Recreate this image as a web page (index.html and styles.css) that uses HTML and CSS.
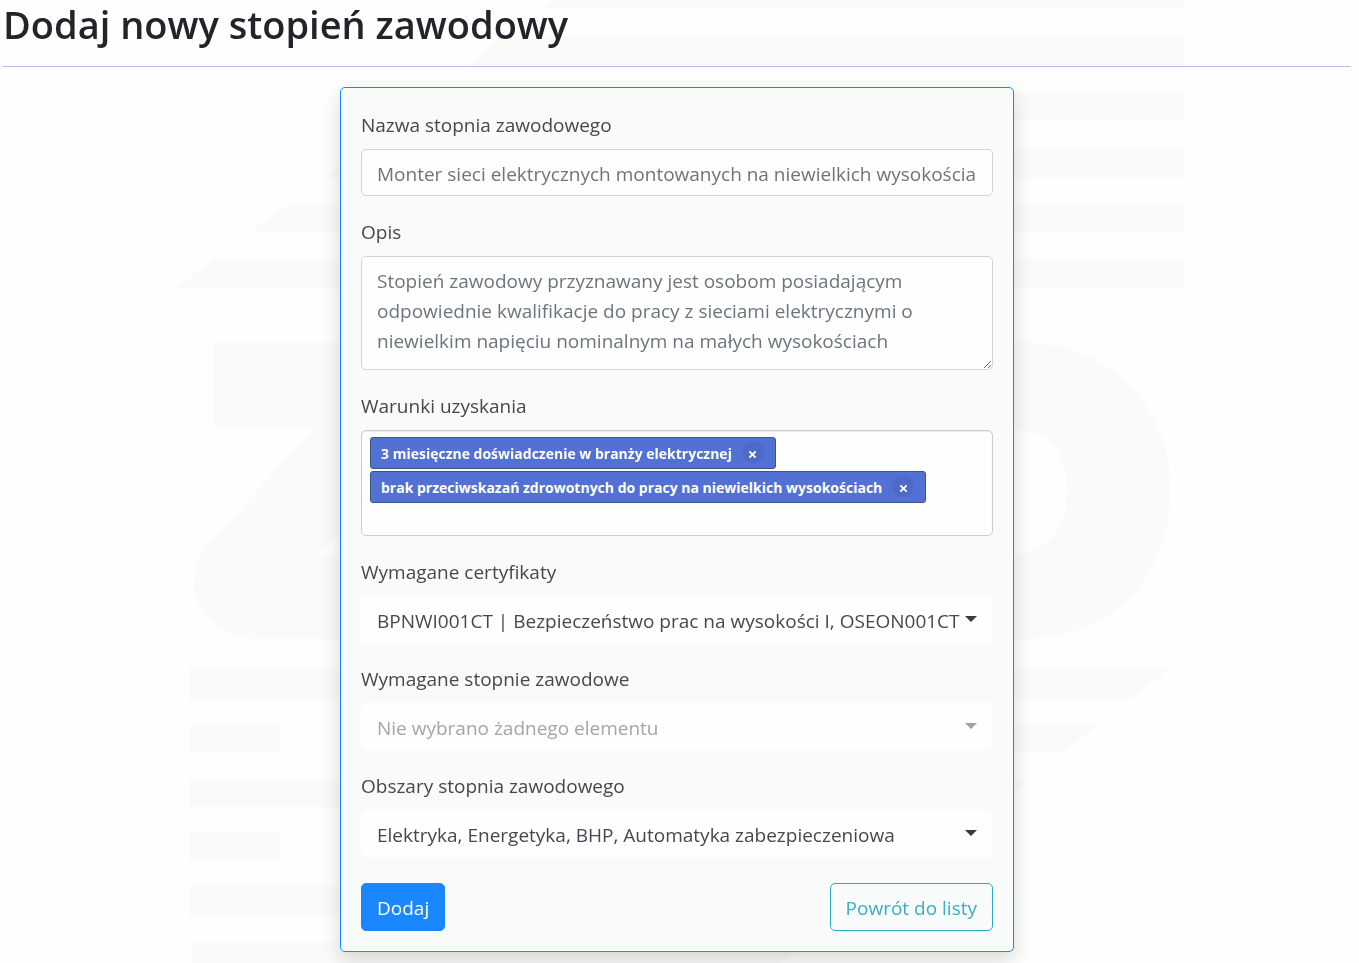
FILE: index.html
```html
<!DOCTYPE html>
<html lang="pl">
<head>
<meta charset="utf-8">
<meta name="viewport" content="width=device-width, initial-scale=1">
<title>Dodaj nowy stopień zawodowy</title>
<link rel="stylesheet" href="styles.css">
</head>
<body>
<svg class="backdrop" viewBox="0 0 1359 963" preserveAspectRatio="xMidYMid slice" aria-hidden="true">
  <g class="backdrop-stripes">
    <path d="M550 0H1183V9H541Z"/>
    <path d="M499 37H1183V66H468Z"/>
    <path d="M430 92H1183V121H391Z"/>
    <path d="M358 149H1183V178H322Z"/>
    <path d="M288 204H1183V233H249Z"/>
    <path d="M217 258H1183V289H175Z"/>
    <path d="M189 668H1171L1130 700H189Z"/>
    <path d="M189 725H280V752H189Z"/>
    <path d="M420 725H1099L1063 752H420Z"/>
    <path d="M189 779H1029L992 807H189Z"/>
    <path d="M189 832H280V860H189Z"/>
    <path d="M189 885H890L850 917H189Z"/>
    <path d="M192 942H810L780 963H192Z"/>
  </g>
  <g class="backdrop-letters">
    <path d="M213 342H560V427L430 554H520V639H258C220 639 194 612 194 582C194 568 198 556 205 548L315 427H213ZM320 554H430L340 533Z"/>
    <path fill-rule="evenodd" d="M855 342H1020C1112 342 1170 405 1170 490C1170 580 1112 639 1020 639H855ZM950 430V554H1014C1050 554 1067 528 1067 490C1067 456 1050 430 1014 430Z"/>
  </g>
</svg>
<main class="page">
  <h1 class="page-title">Dodaj nowy stopień zawodowy</h1>
  <hr class="divider">
  <form class="card">
    <div class="field">
      <label class="label" for="name">Nazwa stopnia zawodowego</label>
      <input class="control" id="name" type="text" placeholder="Monter sieci elektrycznych montowanych na niewielkich wysokościach">
    </div>
    <div class="field">
      <label class="label" for="description">Opis</label>
      <textarea class="control control-area" id="description" rows="3" placeholder="Stopień zawodowy przyznawany jest osobom posiadającym odpowiednie kwalifikacje do pracy z sieciami elektrycznymi o niewielkim napięciu nominalnym na małych wysokościach"></textarea>
    </div>
    <div class="field">
      <label class="label" for="terms">Warunki uzyskania</label>
      <div class="tags">
        <span class="tag">3 miesięczne doświadczenie w branży elektrycznej<button class="tag-remove" type="button" aria-label="Usuń"><svg viewBox="0 0 10 10" aria-hidden="true"><path d="M1.5 1.5L8.5 8.5M8.5 1.5L1.5 8.5"/></svg></button></span>
        <span class="tag">brak przeciwskazań zdrowotnych do pracy na niewielkich wysokościach<button class="tag-remove" type="button" aria-label="Usuń"><svg viewBox="0 0 10 10" aria-hidden="true"><path d="M1.5 1.5L8.5 8.5M8.5 1.5L1.5 8.5"/></svg></button></span>
        <input class="tags-input" id="terms" type="text">
      </div>
    </div>
    <div class="field">
      <label class="label" for="certificates">Wymagane certyfikaty</label>
      <div class="picker">
        <select class="picker-select" id="certificates"><option>BPNWI001CT | Bezpieczeństwo prac na wysokości I, OSEON001CT</option></select>
      </div>
    </div>
    <div class="field">
      <label class="label" for="degrees">Wymagane stopnie zawodowe</label>
      <div class="picker picker-empty">
        <select class="picker-select" id="degrees"><option>Nie wybrano żadnego elementu</option></select>
      </div>
    </div>
    <div class="field">
      <label class="label" for="areas">Obszary stopnia zawodowego</label>
      <div class="picker">
        <select class="picker-select" id="areas"><option>Elektryka, Energetyka, BHP, Automatyka zabezpieczeniowa</option></select>
      </div>
    </div>
    <div class="actions">
      <button class="button button-primary" type="submit">Dodaj</button>
      <a class="button button-outline" href="#lista">Powrót do listy</a>
    </div>
  </form>
</main>
</body>
</html>
```
FILE: styles.css
```css
*, *::before, *::after { box-sizing: border-box; }

body {
  margin: 0;
  background: #fefefe;
  color: #212529;
  font-family: "Segoe UI", "Open Sans", "Noto Sans", sans-serif;
  font-size: 19px;
  line-height: 30px;
}

.backdrop {
  position: fixed;
  inset: 0;
  z-index: -1;
  width: 100%;
  height: 100%;
}
.backdrop-stripes { fill: #fafaf8; }
.backdrop-letters { fill: #fafafa; }

.page { padding: 0 8px 11px 3px; }

.page-title {
  margin: 0;
  padding-bottom: 18px;
  font-size: 38px;
  font-weight: 600;
  line-height: 48px;
}

.divider {
  margin: 0 0 20px;
  border: 0;
  border-top: 1px solid #b4c0ea;
}

.card {
  display: flex;
  flex-direction: column;
  gap: 20px;
  width: 50%;
  min-width: 400px;
  margin: 0 auto;
  padding: 21px 20px 20px;
  border: 1px solid #1a86fc;
  border-radius: 5px;
  background: rgba(248, 250, 250, 0.9);
  box-shadow: 0 8px 20px rgba(0, 0, 0, 0.15);
  color: #45494d;
}

.field { display: flex; flex-direction: column; gap: 10px; }
.label { padding-top: 2px; line-height: 28px; }

.control {
  width: 100%;
  height: 47px;
  padding: 9px 15px 7px;
  border: 1px solid #ced4da;
  border-radius: 5px;
  background: #fefefe;
  color: #495057;
  font: inherit;
}
.control::placeholder { color: #6c757d; opacity: 1; }
.control-area { height: 114px; resize: vertical; overflow: hidden; }

.tags {
  display: flex;
  flex-direction: column;
  align-items: flex-start;
  gap: 2px;
  height: 106px;
  padding: 6px 8px;
  border: 1px solid #ccc;
  border-radius: 5px;
  background: #fefefe;
  box-shadow: inset 0 1px 1px rgba(0, 0, 0, 0.08);
}
.tag {
  display: inline-flex;
  align-items: center;
  gap: 10px;
  height: 32px;
  padding: 2px 11px 0 10px;
  border: 1px solid #36597d;
  border-radius: 3px;
  background: #5371d4;
  color: #fff;
  font-size: 14px;
  font-weight: 700;
  white-space: nowrap;
}
.tag-remove {
  display: flex;
  align-items: center;
  justify-content: center;
  width: 22px;
  height: 22px;
  margin-bottom: 4px;
  padding: 4px 0 0;
  border: 0;
  border-radius: 50%;
  background: #4e6ac6;
}
.tag-remove svg { width: 9px; height: 9px; fill: none; stroke: #fff; stroke-width: 2; }
.tags-input { width: 100%; height: 24px; padding: 0; border: 0; background: none; font: inherit; outline: 0; }

.picker { position: relative; }
.picker::after {
  content: "";
  position: absolute;
  top: 20px;
  right: 16px;
  border: 6px solid transparent;
  border-top-color: #343a40;
  border-bottom: 0;
  pointer-events: none;
}
.picker-select {
  display: block;
  width: 100%;
  height: 47px;
  padding: 2px 32px 0 16px;
  border: 0;
  border-radius: 5px;
  background: #fefefe;
  color: inherit;
  font: inherit;
  appearance: none;
}
.picker-empty { color: #a5a5a5; }
.picker-empty::after { border-top-color: #a0a0a0; }

.actions { display: flex; justify-content: space-between; padding-top: 6px; }
.button {
  height: 48px;
  padding: 9px 15px;
  border: 1px solid #1a86ff;
  border-radius: 5px;
  font: inherit;
  line-height: 30px;
  text-decoration: none;
}
.button-primary { background: #1a86ff; color: #fff; }
.button-outline { border-color: #2fabc0; color: #3aafc2; }
```
